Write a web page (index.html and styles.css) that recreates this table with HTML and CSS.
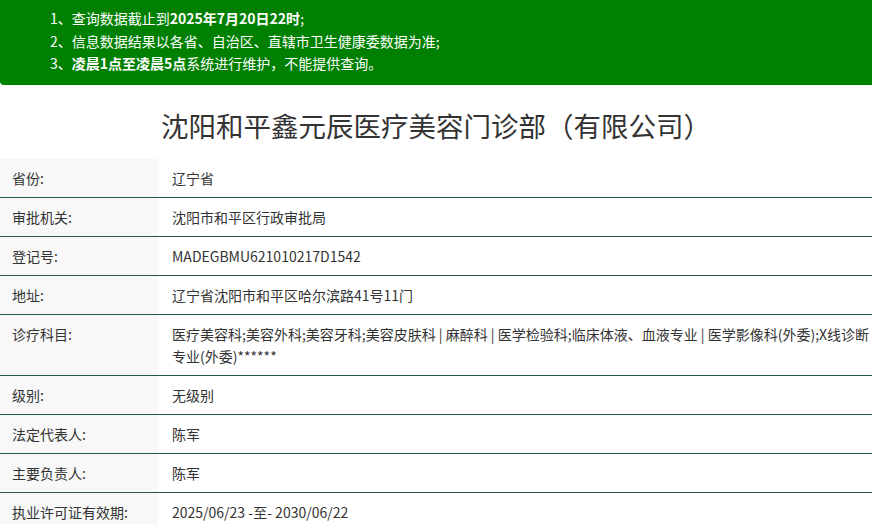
FILE: index.html
```html
<!DOCTYPE html>
<html lang="zh-CN">
<head>
<meta charset="utf-8">
<title>沈阳和平鑫元辰医疗美容门诊部（有限公司）</title>
<link rel="stylesheet" href="styles.css">
</head>
<body>
<div class="notice">
  <p>1、查询数据截止到<b>2025年7月20日22时</b>;</p>
  <p>2、信息数据结果以各省、自治区、直辖市卫生健康委数据为准;</p>
  <p>3、<b>凌晨1点至凌晨5点</b>系统进行维护，不能提供查询。</p>
</div>
<h1 class="title">沈阳和平鑫元辰医疗美容门诊部（有限公司）</h1>
<div class="info">
  <div class="row"><div class="label">省份:</div><div class="value">辽宁省</div></div>
  <div class="row"><div class="label">审批机关:</div><div class="value">沈阳市和平区行政审批局</div></div>
  <div class="row"><div class="label">登记号:</div><div class="value">MADEGBMU621010217D1542</div></div>
  <div class="row"><div class="label">地址:</div><div class="value">辽宁省沈阳市和平区哈尔滨路41号11门</div></div>
  <div class="row"><div class="label">诊疗科目:</div><div class="value">医疗美容科;美容外科;美容牙科;美容皮肤科 | 麻醉科 | 医学检验科;临床体液、血液专业 | 医学影像科(外委);X线诊断专业(外委)******</div></div>
  <div class="row"><div class="label">级别:</div><div class="value">无级别</div></div>
  <div class="row"><div class="label">法定代表人:</div><div class="value">陈军</div></div>
  <div class="row"><div class="label">主要负责人:</div><div class="value">陈军</div></div>
  <div class="row"><div class="label">执业许可证有效期:</div><div class="value">2025/06/23 -至- 2030/06/22</div></div>
</div>
</body>
</html>
```
FILE: styles.css
```css
html, body {
  margin: 0;
  padding: 0;
  background: #fff;
}
body {
  font-family: "Noto Sans CJK SC", "Noto Sans", sans-serif;
  color: #333;
}
.notice {
  background: #008000;
  color: #fff;
  padding: 7px 0 10px 50px;
  border-bottom-left-radius: 4px;
  font-size: 14px;
  line-height: 22.5px;
}
.notice p {
  margin: 0;
}
.notice b {
  font-weight: bold;
}
.title {
  margin: 0;
  padding: 22px 0 15px;
  text-align: center;
  font-size: 27.5px;
  line-height: 37px;
  font-weight: normal;
  color: #333;
}
.info {
  font-size: 14px;
  line-height: 22px;
}
.row {
  display: grid;
  grid-template-columns: 158px 1fr;
  border-bottom: 1px solid #1e5e3e;
}
.label {
  background: #f8f8f8;
  padding: 8px 0 8px 12px;
}
.value {
  padding: 8px 0 8px 14px;
}
```
